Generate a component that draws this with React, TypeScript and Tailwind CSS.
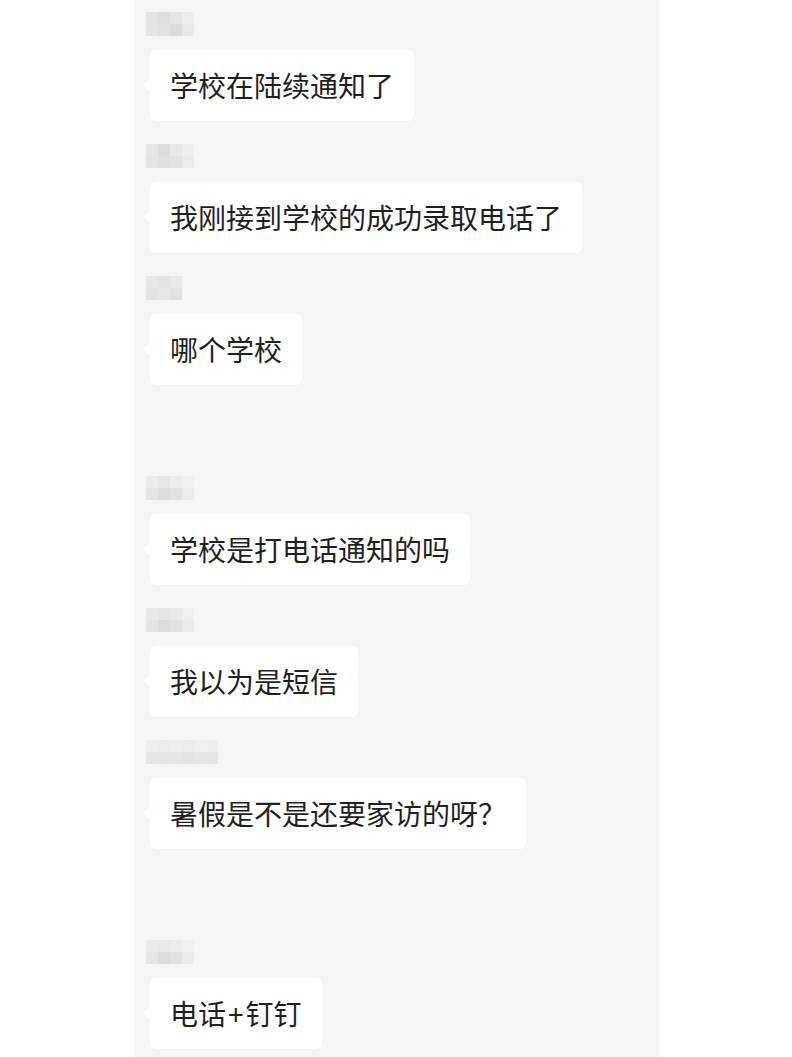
import React from "react";

type Msg = { text: React.ReactNode; name: string[][]; gapBefore?: boolean };

// blurred nickname mosaics (rows of cell colours)
const messages: Msg[] = [
  { text: "学校在陆续通知了", name: [["#e3e3e3", "#dedede", "#e6e6e6", "#ececec"], ["#e5e5e5", "#e1e1e1", "#dcdcdc", "#e8e8e8"]] },
  { text: "我刚接到学校的成功录取电话了", name: [["#e6e6e6", "#dcdcdc", "#e8e8e8", "#eeeeee"], ["#e4e4e4", "#dfdfdf", "#e2e2e2", "#ebebeb"]] },
  { text: "哪个学校", name: [["#e7e7e7", "#e4e4e4", "#e9e9e9"], ["#e3e3e3", "#e6e6e6", "#e1e1e1"]] },
  { text: "学校是打电话通知的吗", gapBefore: true, name: [["#ebebeb", "#e6e6e6", "#ececec", "#f0f0f0"], ["#e5e5e5", "#dddddd", "#e2e2e2", "#ebebeb"]] },
  { text: "我以为是短信", name: [["#e8e8e8", "#e5e5e5", "#e9e9e9", "#efefef"], ["#e4e4e4", "#dcdcdc", "#e1e1e1", "#eaeaea"]] },
  { text: "暑假是不是还要家访的呀？", name: [["#eeeeee", "#ececec", "#eeeeee", "#ececec", "#efefef", "#eeeeee"], ["#e6e6e6", "#e5e5e5", "#e6e6e6", "#e4e4e4", "#e6e6e6", "#e5e5e5"]] },
  {
    text: (
      <>
        电话<span className="px-[2px]">+</span>钉钉
      </>
    ),
    gapBefore: true,
    name: [["#ebebeb", "#e9e9e9", "#ececec", "#f0f0f0"], ["#e6e6e6", "#dcdcdc", "#e1e1e1", "#eaeaea"]],
  },
];

function NameMosaic({ rows }: { rows: string[][] }) {
  return (
    <div className="flex flex-col blur-[0.6px]">
      {rows.map((row, r) => (
        <div key={r} className="flex">
          {row.map((c, i) => (
            <div key={i} className="w-[12px] h-[12px]" style={{ backgroundColor: c }} />
          ))}
        </div>
      ))}
    </div>
  );
}

function Bubble({ text }: { text: React.ReactNode }) {
  return (
    <div className="relative ml-[4px] self-start bg-white rounded-[6px] px-[20px] py-[17px] text-[28px] leading-[37px] text-[#1f1f1f] whitespace-nowrap">
      <span className="absolute left-[-7px] top-[29px] w-0 h-0 border-y-[6px] border-y-transparent border-r-[7px] border-r-white" />
      {text}
    </div>
  );
}

export default function App() {
  return (
    <div className="min-h-[1057px] w-[792px] bg-white" style={{ fontFamily: '"Noto Sans CJK SC", "Noto Sans", sans-serif' }}>
      <div className="ml-[134px] w-[525px] min-h-[1057px] bg-[#f5f5f5] pl-[12px] pt-[12px] flex flex-col">
        {messages.map((m, i) => (
          <div key={i} className={`flex flex-col ${i === 0 ? "" : m.gapBefore ? "mt-[91px]" : "mt-[23px]"}`}>
            <NameMosaic rows={m.name} />
            <div className="h-[14px]" />
            <Bubble text={m.text} />
          </div>
        ))}
      </div>
    </div>
  );
}
